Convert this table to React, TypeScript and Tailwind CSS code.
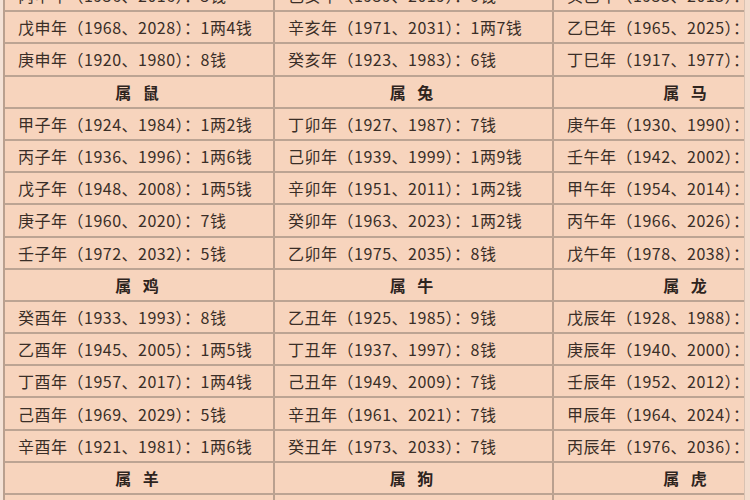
const groups: { header?: string[]; cells?: string[] }[] = [
  { cells: ["丙申年（1956、2016）：5钱", "己亥年（1959、2019）：9钱", "癸巳年（1953、2013）：7钱"] },
  { cells: ["戊申年（1968、2028）：1两4钱", "辛亥年（1971、2031）：1两7钱", "乙巳年（1965、2025）：7钱"] },
  { cells: ["庚申年（1920、1980）：8钱", "癸亥年（1923、1983）：6钱", "丁巳年（1917、1977）：6钱"] },
  { header: ["属 鼠", "属 兔", "属 马"] },
  { cells: ["甲子年（1924、1984）：1两2钱", "丁卯年（1927、1987）：7钱", "庚午年（1930、1990）：9钱"] },
  { cells: ["丙子年（1936、1996）：1两6钱", "己卯年（1939、1999）：1两9钱", "壬午年（1942、2002）：8钱"] },
  { cells: ["戊子年（1948、2008）：1两5钱", "辛卯年（1951、2011）：1两2钱", "甲午年（1954、2014）：1两5钱"] },
  { cells: ["庚子年（1960、2020）：7钱", "癸卯年（1963、2023）：1两2钱", "丙午年（1966、2026）：1两3钱"] },
  { cells: ["壬子年（1972、2032）：5钱", "乙卯年（1975、2035）：8钱", "戊午年（1978、2038）：1两9钱"] },
  { header: ["属 鸡", "属 牛", "属 龙"] },
  { cells: ["癸酉年（1933、1993）：8钱", "乙丑年（1925、1985）：9钱", "戊辰年（1928、1988）：1两2钱"] },
  { cells: ["乙酉年（1945、2005）：1两5钱", "丁丑年（1937、1997）：8钱", "庚辰年（1940、2000）：1两2钱"] },
  { cells: ["丁酉年（1957、2017）：1两4钱", "己丑年（1949、2009）：7钱", "壬辰年（1952、2012）：1两"] },
  { cells: ["己酉年（1969、2029）：5钱", "辛丑年（1961、2021）：7钱", "甲辰年（1964、2024）：8钱"] },
  { cells: ["辛酉年（1921、1981）：1两6钱", "癸丑年（1973、2033）：7钱", "丙辰年（1976、2036）：8钱"] },
  { header: ["属 羊", "属 狗", "属 虎"] },
  { cells: ["乙未年（1955、2015）：6钱", "甲戌年（1934、1994）：1两5钱", "戊寅年（1938、1998）：8钱"] },
];

const widths = ["w-[270px]", "w-[279px]", "w-[268px]"];

export default function App() {
  return (
    <div
      className="flex h-[500px] w-[750px] overflow-hidden bg-[#f4e2d6] text-[#3a2e27]"
      style={{ fontFamily: '"Noto Sans CJK SC", "Noto Sans", sans-serif' }}
    >
      <div className="w-[744px] shrink-0 overflow-hidden pl-[3px]">
        <div className="-mt-[20px] w-[819px] border-l-2 border-[#b9a08f] bg-[#f7d4bd]">
          {groups.map((row, i) => (
            <div key={i} className="flex h-[32.2px] border-b-2 border-[#bca493]">
              {(row.header ?? row.cells ?? []).map((text, j) => (
                <div
                  key={j}
                  className={`${widths[j]} flex shrink-0 items-center border-r-2 border-[#b9a08f] ${
                    row.header
                      ? "justify-center text-[16px] font-bold tracking-[4px] text-[#2e241e]"
                      : "pl-[13px] text-[16px] tracking-[0.5px]"
                  }`}
                >
                  <span className="whitespace-nowrap leading-none">{text}</span>
                </div>
              ))}
            </div>
          ))}
        </div>
      </div>
      <div className="w-[6px] shrink-0 border-l border-[#d9c2b2] bg-[#f3dccd]" />
    </div>
  );
}
